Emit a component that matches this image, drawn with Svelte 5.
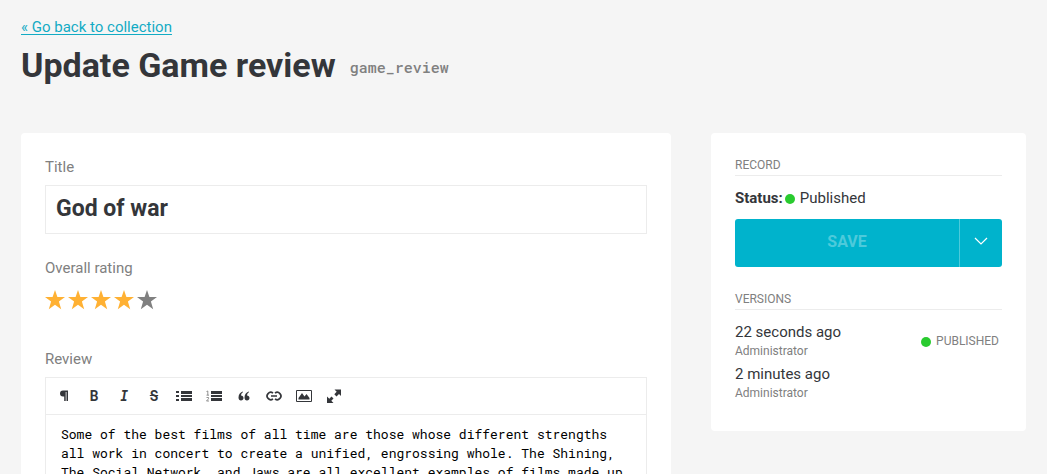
<script>
  let title = $state('God of war');
  let rating = $state(4);
  let review = $state(
    'Some of the best films of all time are those whose different strengths all work in concert to create a unified, engrossing whole. The Shining, The Social Network, and Jaws are all excellent examples of films made up'
  );
  const versions = [
    { time: '22 seconds ago', author: 'Administrator', published: true },
    { time: '2 minutes ago', author: 'Administrator', published: false }
  ];
</script>

<main class="page">
  <header>
    <a class="back" href="#collection">« Go back to collection</a>
    <div class="heading">
      <h1>Update Game review</h1>
      <code>game_review</code>
    </div>
  </header>

  <div class="columns">
    <form class="panel">
      <div class="field">
        <label class="caption" for="title">Title</label>
        <input id="title" class="title" type="text" bind:value={title} />
      </div>

      <fieldset class="field rating">
        <legend class="caption">Overall rating</legend>
        <div class="stars">
          {#each [1, 2, 3, 4, 5] as n}
            <label class="star" class:on={n <= rating}>
              <input type="radio" name="rating" value={n} bind:group={rating} aria-label="{n} of 5" />
              <svg viewBox="0 0 20 20" aria-hidden="true">
                <path d="M10 0l2.4 7.1H20l-6.100 4.500 2.300 7.600L10 14.800l-6.200 4.400 2.300-7.600L0 7.100h7.600z" />
              </svg>
            </label>
          {/each}
        </div>
      </fieldset>

      <div class="field">
        <label class="caption" for="review">Review</label>
        <div class="editor">
          <div class="toolbar">
            <button type="button" aria-label="Format">
              <svg viewBox="0 0 16 16"><path d="M7 2.500h5V13h-1.500V4H9.700v9H8.200V8.500H7a3 3 0 0 1 0-6z" /></svg>
            </button>
            <button type="button" class="letter">B</button>
            <button type="button" class="letter italic">I</button>
            <button type="button" class="letter strike">S</button>
            <button type="button" aria-label="Bullet list">
              <svg viewBox="0 0 16 16"><path d="M0 3h3v2H0zM0 7h3v2H0zM0 11h3v2H0zM5 3h11v3H5zM5 7h11v2H5zM5 10h11v3H5z" /></svg>
            </button>
            <button type="button" aria-label="Numbered list">
              <svg viewBox="0 0 16 16"><path d="M5 3h11v3H5zM5 7h11v2H5zM5 10h11v3H5z" /><path d="M.5 3.500L1.800 3v4M.5 7.200h2.500M.5 9.500h2v1.300L.5 13h2.500" fill="none" stroke="#777" stroke-width=".8" /></svg>
            </button>
            <button type="button" aria-label="Quote">
              <svg viewBox="0 0 16 16"><path d="M7 3.500C4.500 4 2.500 6 2.500 9.500c0 2 1 3 2.500 3s2.500-1 2.500-2.500S6.500 7.500 5 7.500C5.100 6 5.800 4.800 7 4.200zM13 3.500c-2.500.5-4.500 2.500-4.500 6 0 2 1 3 2.500 3s2.500-1 2.500-2.500-1-2.500-2.500-2.500c.1-1.500.8-2.700 2-3.300z" /></svg>
            </button>
            <button type="button" aria-label="Link">
              <svg viewBox="0 0 16 16"><path d="M7 5.200A3.600 3.600 0 1 0 7 10.800M9 5.200a3.600 3.600 0 1 1 0 5.600M5 8h6" fill="none" stroke="currentColor" stroke-width="1.700" /></svg>
            </button>
            <button type="button" aria-label="Image">
              <svg viewBox="0 0 16 16"><path d="M.5 2.500h15v11H.5z" fill="none" stroke="currentColor" /><path d="M2.500 11.500V10l3.500-5 2.500 3.500L10.500 6l3 4v1.500z" /></svg>
            </button>
            <button type="button" aria-label="Fullscreen">
              <svg viewBox="0 0 16 16"><path d="M8.500 1.500H15V8l-2-2-2.500 2.500L8.300 6.300l2.400-2.500zM1 15V8.500l2.300 2.200 2.200-2.200 2 2-2.200 2.300L7.500 15z" /></svg>
            </button>
          </div>
          <textarea id="review" rows="3" spellcheck="false" bind:value={review}></textarea>
        </div>
      </div>
    </form>

    <aside class="panel side">
      <section>
        <h2>Record</h2>
        <p class="status"><strong>Status:</strong><span class="dot"></span>Published</p>
        <div class="actions">
          <button type="button" class="save" disabled>SAVE</button>
          <button type="button" class="more" aria-label="More actions">
            <svg viewBox="0 0 14 8"><path d="M1 1l6 6 6-6" fill="none" stroke="#fff" stroke-width="1.200" /></svg>
          </button>
        </div>
      </section>

      <section>
        <h2>Versions</h2>
        <ul>
          {#each versions as version}
            <li>
              <div>
                <div class="time">{version.time}</div>
                <div class="author">{version.author}</div>
              </div>
              {#if version.published}
                <span class="badge"><span class="dot"></span>PUBLISHED</span>
              {/if}
            </li>
          {/each}
        </ul>
      </section>
    </aside>
  </div>
</main>

<style>
  :global(body) {
    margin: 0;
    background: #f5f5f5;
  }
  .page, .page * {
    box-sizing: border-box;
  }
  .page {
    padding: 16px 21px;
    color: #34363a;
    font: 15px/22px Roboto, 'Liberation Sans', sans-serif;
  }
  button, input, textarea {
    font: inherit;
    color: inherit;
    margin: 0;
  }
  header {
    padding-bottom: 41px;
  }
  .back {
    display: inline-block;
    color: #12abc4;
    text-underline-offset: 2px;
  }
  .heading {
    display: flex;
    align-items: center;
    gap: 14px;
  }
  h1 {
    margin: 0;
    font-size: 34px;
    line-height: 54px;
    font-weight: 700;
  }
  code {
    padding-top: 3px;
    color: #808080;
    font: 500 15px/22px 'Roboto Mono', 'DejaVu Sans Mono', monospace;
  }
  .columns {
    display: grid;
    grid-template-columns: minmax(0, 1fr) 315px;
    gap: 40px;
    align-items: start;
  }
  .panel {
    padding: 24px;
    background: #fff;
    border-radius: 4px;
  }
  .field {
    margin: 0 0 24px;
    padding: 0;
    border: 0;
  }
  .caption {
    display: block;
    padding: 0;
    margin-bottom: 8px;
    color: #808080;
    line-height: 20px;
  }
  .title {
    display: block;
    width: 100%;
    height: 49px;
    padding: 0 10px 2px;
    border: 1px solid #ececec;
    font-size: 23px;
    font-weight: 700;
  }
  .rating {
    margin-bottom: 37px;
  }
  .stars {
    display: flex;
    gap: 3px;
  }
  .star {
    position: relative;
    height: 26px;
    padding-top: 4px;
    color: #808080;
  }
  .star.on {
    color: #ffb133;
  }
  .star input {
    position: absolute;
    opacity: 0;
  }
  .star svg {
    display: block;
    width: 20px;
    height: 20px;
    fill: currentColor;
  }
  .editor {
    border: 1px solid #ececec;
  }
  .toolbar {
    display: flex;
    padding: 0 3px;
    border-bottom: 1px solid #ececec;
  }
  .toolbar button {
    display: grid;
    place-items: center;
    width: 30px;
    height: 36px;
    padding: 0;
    border: 0;
    background: none;
  }
  .toolbar svg {
    width: 16px;
    height: 16px;
    fill: currentColor;
  }
  .toolbar .letter {
    font: 700 14px/16px 'Roboto Mono', 'DejaVu Sans Mono', monospace;
  }
  .toolbar .italic {
    font-style: italic;
  }
  .toolbar .strike {
    text-decoration: line-through;
  }
  textarea {
    display: block;
    width: 100%;
    padding: 10px 15px;
    border: 0;
    resize: none;
    overflow: hidden;
    color: #000;
    font: 13px/19px 'Roboto Mono', 'DejaVu Sans Mono', monospace;
  }
  h2 {
    margin: 0 0 11px;
    padding-bottom: 2px;
    border-bottom: 1px solid #ececec;
    color: #808080;
    font-size: 12px;
    line-height: 16px;
    font-weight: 400;
    text-transform: uppercase;
  }
  .status {
    display: flex;
    align-items: center;
    margin: 0 0 10px;
  }
  .dot {
    width: 10px;
    height: 10px;
    margin: 2px 5px 0 2px;
    border-radius: 50%;
    background: #29cb2f;
  }
  .actions {
    display: flex;
    height: 48px;
    border-radius: 3px;
    overflow: hidden;
    background: #00b3cc;
  }
  .actions button {
    padding: 0;
    border: 0;
    background: none;
  }
  .actions .save {
    flex: 1;
    padding-bottom: 3px;
    color: #4dcadb;
    font-size: 16px;
    font-weight: 700;
  }
  .actions .more {
    width: 43px;
    padding-bottom: 6px;
    border-left: 1px solid #4dcadb;
  }
  .more svg {
    width: 14px;
    height: 8px;
  }
  .side {
    padding-bottom: 26px;
  }
  .side section + section {
    margin-top: 24px;
  }
  ul {
    margin: 0;
    padding: 0;
    list-style: none;
  }
  li {
    display: flex;
    align-items: center;
    justify-content: space-between;
    height: 42px;
    padding-bottom: 2px;
  }
  .time {
    line-height: 20px;
  }
  .author, .badge {
    color: #808080;
    font-size: 12px;
    line-height: 18px;
  }
  .badge {
    display: flex;
    align-items: center;
    padding-right: 3px;
  }
</style>
